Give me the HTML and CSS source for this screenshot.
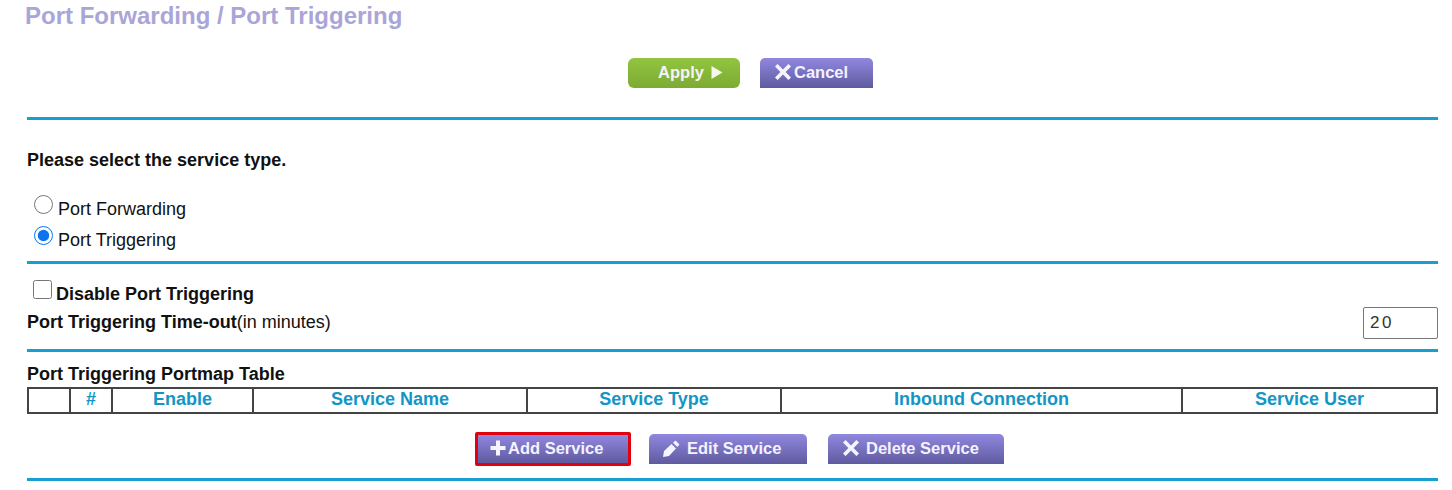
FILE: index.html
```html
<!DOCTYPE html>
<html lang="en">
<head>
<meta charset="utf-8">
<title>Port Forwarding / Port Triggering</title>
<link rel="stylesheet" href="styles.css">
</head>
<body>
<h1 class="title">Port Forwarding / Port Triggering</h1>
<main class="content">
  <div class="actions actions-top">
    <button class="btn btn-green btn-apply" type="button">Apply <svg class="ic-play" width="12" height="13" viewBox="0 0 12 13"><path d="M.5 0 11.5 6.5.5 13z"/></svg></button>
    <button class="btn btn-purple btn-cancel" type="button"><svg class="ic" width="16" height="16" viewBox="0 0 16 16"><path d="M0 2.500 2.600 0 8 5.500 13.400 0 16 2.500 10.600 8 16 13.500 13.400 16 8 10.500 2.600 16 0 13.500 5.400 8z"/></svg>Cancel</button>
  </div>
  <hr class="rule rule-top">
  <p class="prompt">Please select the service type.</p>
  <label class="radio-row radio-first"><input type="radio" name="svc" class="radio"><span>Port Forwarding</span></label>
  <label class="radio-row radio-second"><input type="radio" name="svc" class="radio" checked><span>Port Triggering</span></label>
  <hr class="rule rule-mid">
  <label class="check-row"><input type="checkbox" class="check"><b>Disable Port Triggering</b></label>
  <div class="timeout-row">
    <span><b>Port Triggering Time-out</b>(in minutes)</span>
    <input class="timeout" type="text" value="20">
  </div>
  <hr class="rule rule-table">
  <div class="table-title">Port Triggering Portmap Table</div>
  <table class="portmap">
    <thead>
      <tr>
        <th class="c0"></th>
        <th class="c1">#</th>
        <th class="c2">Enable</th>
        <th class="c3">Service Name</th>
        <th class="c4">Service Type</th>
        <th class="c5">Inbound Connection</th>
        <th class="c6">Service User</th>
      </tr>
    </thead>
  </table>
  <div class="actions actions-bottom">
    <button class="btn btn-purple btn-add" type="button"><svg class="ic" width="16" height="16" viewBox="0 0 16 16"><path d="M6 .5h4V6h5.500v4H10v5.500H6V10H.5V6H6z"/></svg>Add Service</button>
    <button class="btn btn-purple btn-edit" type="button"><svg class="ic" width="17" height="17" viewBox="0 0 17 17"><path d="M0 17 1 11 8.500 4 13 8.500 6 16zM10 2.800 12.500.6 16.500 4.500 14.300 7z"/></svg>Edit Service</button>
    <button class="btn btn-purple btn-delete" type="button"><svg class="ic" width="16" height="16" viewBox="0 0 16 16"><path d="M0 2.500 2.600 0 8 5.500 13.400 0 16 2.500 10.600 8 16 13.500 13.400 16 8 10.500 2.600 16 0 13.500 5.400 8z"/></svg>Delete Service</button>
  </div>
  <hr class="rule rule-bottom">
</main>
</body>
</html>
```
FILE: styles.css
```css
html, body {
  margin: 0;
  padding: 0;
  background: #fff;
}
body {
  font-family: "Liberation Sans", Arial, sans-serif;
  font-size: 18px;
  color: #111;
  overflow: hidden;
}
.title {
  margin: 0;
  padding: 1px 0 0 25px;
  height: 31px;
  font-size: 24px;
  line-height: 29px;
  font-weight: 700;
  color: #aaa5d8;
}
.content {
  margin: 0 14px 0 27px;
}
.rule {
  border: 0;
  height: 3px;
  margin: 0;
  background: #169fd0;
}
.actions {
  display: flex;
  align-items: flex-start;
}
.actions-top {
  padding: 26px 0 0 601px;
  height: 32px;
  box-sizing: content-box;
}
.btn {
  display: flex;
  align-items: center;
  justify-content: center;
  border: 0;
  padding: 0 0 2px;
  font-family: "Liberation Sans", Arial, sans-serif;
  font-size: 16.5px;
  line-height: 28px;
  font-weight: 700;
  color: #f4f2ff;
  border-radius: 5px 5px 0 0;
}
.btn-green {
  background: linear-gradient(#93c440, #7cab32);
  border-radius: 6px;
  width: 112px;
  height: 30px;
  gap: 7px;
  padding-left: 13px;
  box-sizing: border-box;
}
.btn-purple {
  background: linear-gradient(#9087df, #605a9f);
  height: 30px;
}
.btn-cancel {
  width: 113px;
  margin-left: 20px;
  justify-content: flex-start;
  padding-left: 15px;
  gap: 3px;
  box-sizing: border-box;
}
.ic { fill: #f6f5ff; flex: none; }
.ic-play { fill: #f4f8ea; flex: none; }
.rule-top { margin-top: 27px; }
.prompt {
  margin: 30px 0 0;
  font-size: 18px;
  line-height: 20px;
  font-weight: 700;
}
.radio-row {
  display: flex;
  align-items: center;
  height: 31px;
}
.radio-first { margin-top: 24px; }
.radio {
  appearance: auto;
  width: 19px;
  height: 19px;
  margin: -11px 5px 0 7px;
  accent-color: #0a75ef;
}
.rule-mid { margin-top: 5px; }
.check-row {
  display: flex;
  align-items: center;
  margin-top: 19px;
  height: 22px;
  font-size: 18px;
}
.check {
  appearance: auto;
  width: 19px;
  height: 19px;
  margin: -10px 4px 0 6px;
}
.timeout-row {
  display: flex;
  justify-content: space-between;
  align-items: flex-start;
  margin-top: 4px;
  height: 41px;
  line-height: 26px;
  font-size: 18px;
}
.timeout {
  width: 75px;
  height: 32px;
  box-sizing: border-box;
  margin: -2px 0 0;
  padding: 0 6px;
  border: 1px solid #777;
  border-radius: 2px;
  font-family: "Liberation Sans", sans-serif;
  font-size: 17px;
  letter-spacing: 2.500px;
  color: #333;
}
.rule-table { margin-top: -1px; }
.table-title {
  margin-top: 12px;
  font-size: 18px;
  line-height: 20px;
  font-weight: 700;
}
.portmap {
  width: 1411px;
  table-layout: fixed;
  border-collapse: collapse;
  margin-top: 3px;
}
.portmap th {
  height: 20px;
  padding: 0 0 3px;
  border: 2px solid #444;
  font-size: 18px;
  line-height: 20px;
  font-weight: 700;
  color: #1396c6;
  text-align: center;
}
.c0 { width: 40px; }
.c1 { width: 40px; }
.c2 { width: 139px; }
.c3 { width: 272px; }
.c4 { width: 252px; }
.c5 { width: 399px; }
.actions-bottom {
  margin-top: 18px;
  padding-left: 448px;
  height: 34px;
}
.btn-add {
  width: 156px;
  height: 34px;
  box-sizing: border-box;
  border: 3px solid #e0020f;
  border-radius: 2px;
  justify-content: flex-start;
  padding-left: 12px;
  gap: 2px;
}
.btn-edit {
  width: 158px;
  margin: 2px 0 0 18px;
  justify-content: flex-start;
  padding-left: 14px;
  gap: 7px;
}
.btn-delete {
  width: 176px;
  margin: 2px 0 0 21px;
  justify-content: flex-start;
  padding-left: 15px;
  gap: 7px;
}
.rule-bottom { margin-top: 12px; }
```
